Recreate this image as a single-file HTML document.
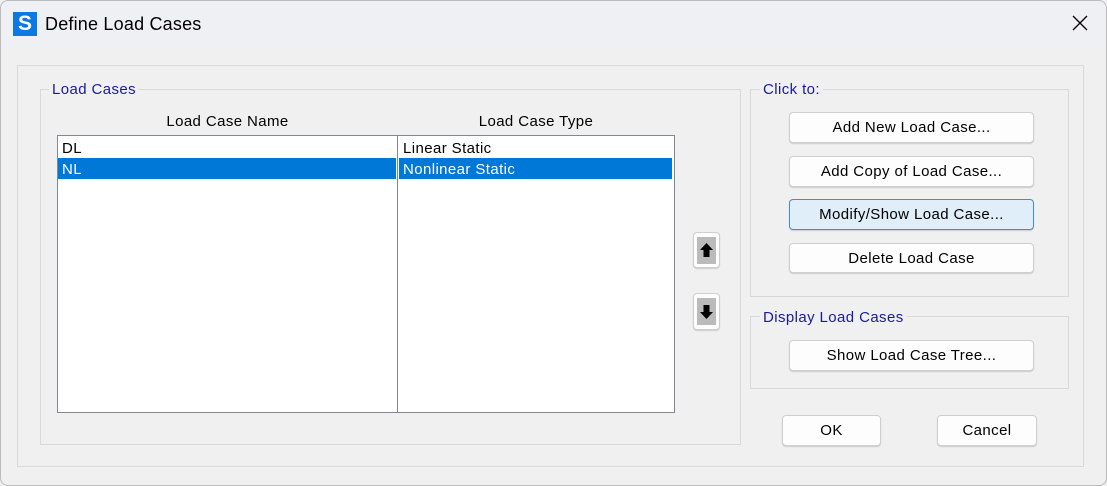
<!DOCTYPE html>
<html><head><style>
body{margin:0;width:1107px;height:486px;background:#f0f0f0;font-family:"Liberation Sans",sans-serif;font-size:15px;color:#000;position:relative;overflow:hidden;letter-spacing:0.4px}
.a{position:absolute;box-sizing:border-box}
.title{left:0;top:0;width:1107px;height:48px;background:#eff0f4}
.grp{border:1px solid #d9d9d9}
.leg{background:#f0f0f0;color:#1a1aa0;padding:0 3px;font-size:15px}
.btn{background:#fdfdfd;border:1px solid #cfcfcf;border-radius:4px;text-align:center;line-height:30px;box-shadow:0 1px 1px #ccc}
.row{height:21px;line-height:23px;padding-left:4px}
.sel{background:#0078d7;color:#fff}
</style></head><body>
<div class="a title"></div>
<div class="a" style="left:13px;top:12px;width:24px;height:24px;background:#0b78e3;color:#fff;font-weight:bold;font-size:21px;text-align:center;line-height:24px;letter-spacing:0">S</div>
<div class="a" style="left:45px;top:12px;font-size:18px;line-height:24px;letter-spacing:0.2px">Define Load Cases</div>
<svg class="a" style="left:1072px;top:15px" width="16" height="16"><path d="M1 1L15 15M15 1L1 15" stroke="#000" stroke-width="1.3"/></svg>
<div class="a" style="left:0;top:0;width:1107px;height:486px;border:1px solid #bbb;border-radius:8px"></div>
<div class="a grp" style="left:17px;top:65px;width:1067px;height:402px"></div>
<div class="a grp" style="left:40px;top:89px;width:701px;height:356px"></div>
<div class="a leg" style="left:49px;top:81px">Load Cases</div>
<div class="a" style="left:57px;top:113px;width:341px;text-align:center">Load Case Name</div>
<div class="a" style="left:398px;top:113px;width:276px;text-align:center">Load Case Type</div>
<div class="a" style="left:57px;top:135px;width:618px;height:278px;background:#fff;border:1px solid #828790"></div>
<div class="a" style="left:397px;top:135px;width:1px;height:278px;background:#828790"></div>
<div class="a" style="left:58px;top:137px;width:338px"><div class="row">DL</div><div class="row sel">NL</div></div>
<div class="a" style="left:399px;top:137px;width:273px"><div class="row">Linear Static</div><div class="row sel">Nonlinear Static</div></div>
<div class="a btn" style="left:693px;top:232px;width:27px;height:36px"><svg style="position:absolute;left:3px;top:4px" width="19" height="27"><rect width="19" height="27" fill="#bbb"/><path d="M9.5 6L16 13H12.5V20H6.5V13H3Z" fill="#000"/></svg></div>
<div class="a btn" style="left:693px;top:293px;width:27px;height:37px"><svg style="position:absolute;left:3px;top:4px" width="19" height="27"><rect width="19" height="27" fill="#bbb"/><path d="M9.5 21L16 14H12.5V7H6.5V14H3Z" fill="#000"/></svg></div>
<div class="a grp" style="left:750px;top:89px;width:319px;height:208px"></div>
<div class="a leg" style="left:760px;top:81px">Click to:</div>
<div class="a btn" style="left:789px;top:112px;width:245px;height:31px">Add New Load Case...</div>
<div class="a btn" style="left:789px;top:156px;width:245px;height:31px">Add Copy of Load Case...</div>
<div class="a btn" style="left:789px;top:199px;width:245px;height:31px;background:#e0eef9;border:1px solid #3c8fdc">Modify/Show Load Case...</div>
<div class="a btn" style="left:789px;top:243px;width:245px;height:30px">Delete Load Case</div>
<div class="a grp" style="left:750px;top:316px;width:319px;height:73px"></div>
<div class="a leg" style="left:760px;top:309px">Display Load Cases</div>
<div class="a btn" style="left:789px;top:340px;width:245px;height:31px">Show Load Case Tree...</div>
<div class="a btn" style="left:782px;top:415px;width:99px;height:31px">OK</div>
<div class="a btn" style="left:937px;top:415px;width:100px;height:31px">Cancel</div>
</body></html>
